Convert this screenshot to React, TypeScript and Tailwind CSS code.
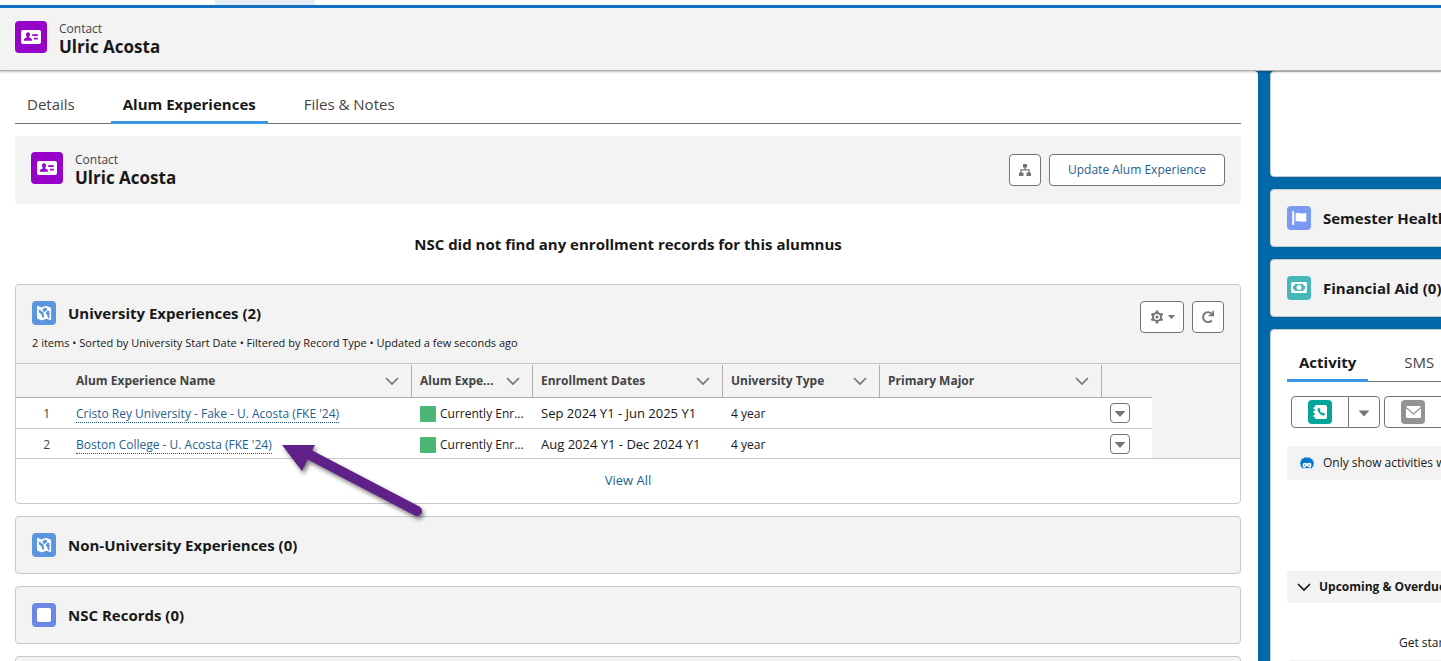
import type { ReactNode } from "react";

type IconProps = { className?: string };

function ContactIcon() {
  return (
    <span className="flex h-8 w-8 shrink-0 items-center justify-center rounded bg-[#9602c7]">
      <svg viewBox="0 0 20 14" className="h-[14px] w-5" aria-hidden="true">
        <rect width="20" height="14" rx="2" fill="#fff" />
        <path
          d="M7 2.2c1.3 0 2 1 2 2.2 0 .9-.4 1.6-.9 2.100-.2.700 0 1 .5 1.200l1.300.6c.7.300.9.800.9 1.500v.9H3v-.9c0-.7.300-1.200.9-1.500l1.400-.6c.5-.2.600-.6.400-1.200C5.300 6 5 5.300 5 4.400 5 3.200 5.700 2.200 7 2.200zM11.200 4.200h5.600v1.700h-5.600zM13 7.700h3.800v1.700H13z"
          fill="#9602c7"
        />
      </svg>
    </span>
  );
}

function MapIcon() {
  return (
    <span className="flex h-6 w-6 shrink-0 items-center justify-center rounded bg-[#5a95dd]">
      <svg viewBox="0 0 24 24" className="h-6 w-6" aria-hidden="true">
        <path
          d="M5 5.800c0-.6.400-.9 1-.7l3.500 1.300 4.200-1.500c.3-.1.600-.1.900 0l3.900 1.500c.4.200.6.500.6.900v11.100c0 .6-.5.900-1 .7l-3.600-1.300-4.200 1.500c-.3.100-.6.100-.9 0l-3.800-1.500c-.4-.2-.6-.5-.6-.9z"
          fill="#fff"
        />
        <path
          d="M6.500 8.500l2 .8 1.700 1.500 1.600.4-.5 1.800 1 1.600-.8 2.400-1.400-.8-.8-3-2-1.500zM10.500 8l3-1.500 1.800 1-.8 2-1.800 1.500-1.800-.7zM13.500 12l2.200-2.500 1.800.5v7.500l-1.500-.7-.8-2.500z"
          fill="#5a95dd"
        />
      </svg>
    </span>
  );
}

function SquareIcon() {
  return (
    <span className="flex h-6 w-6 shrink-0 items-center justify-center rounded bg-[#6b87e6]">
      <span className="h-[14px] w-[14px] rounded-xs bg-white" />
    </span>
  );
}

function FlagIcon() {
  return (
    <span className="flex h-6 w-6 shrink-0 items-center justify-center rounded bg-[#7a9af2]">
      <svg viewBox="0 0 24 24" className="h-6 w-6" aria-hidden="true">
        <path
          d="M6.200 4.900a1 1 0 0 1 1 1v12.600c0 .3-.2.500-.5.500h-1c-.3 0-.5-.2-.5-.5V5.900a1 1 0 0 1 1-1zM8.600 7.400c3.400-2 5.500 1.300 10.100-.3.300-.1.600.1.600.4v7.300c0 .300-.2.500-.5.600-4.300 1.500-6.700-1.300-10.200.2z"
          fill="#fff"
        />
      </svg>
    </span>
  );
}

function MoneyIcon() {
  return (
    <span className="flex h-6 w-6 shrink-0 items-center justify-center rounded bg-[#45b7b7]">
      <svg viewBox="0 0 24 24" className="h-6 w-6" aria-hidden="true">
        <rect x="4" y="6" width="16" height="11" rx="1.500" fill="#fff" />
        <path d="M8 8h8c0 1 .8 2 2 2v3c-1.200 0-2 1-2 2H8c0-1-.8-2-2-2v-3c1.200 0 2-1 2-2z" fill="#45b7b7" />
        <circle cx="12" cy="11.500" r="2.500" fill="#fff" />
      </svg>
    </span>
  );
}

function CallIcon() {
  return (
    <svg viewBox="0 0 24 24" className="h-6 w-6" aria-hidden="true">
      <rect width="24" height="24" rx="4" fill="#06a59a" />
      <path
        d="M8.500 5h8.700c1 0 1.800.8 1.800 1.800v10.400c0 1-.8 1.800-1.800 1.800H8.500c-1 0-1.800-.8-1.800-1.800v-.4h-.5a.9.900 0 0 1 0-1.800h.5v-2.100h-.5a.9.900 0 0 1 0-1.800h.5V9h-.5a.9.900 0 0 1 0-1.800h.5v-.4c0-1 .8-1.800 1.800-1.800z"
        fill="#fff"
      />
      <path
        d="M10 8.500c.5-.6 1.300-.7 1.700 0l.7 1.200c.2.400 0 .8-.4 1.100.4 1.200 1.100 1.900 2.200 2.300.3-.4.700-.6 1.100-.4l1.200.7c.7.400.6 1.200 0 1.700-.8.800-2 .6-3.400-.3-1.200-.8-2.200-1.800-2.900-3-.7-1.300-.9-2.500-.2-3.300z"
        fill="#06a59a"
      />
    </svg>
  );
}

function EmailIcon() {
  return (
    <svg viewBox="0 0 24 24" className="h-6 w-6" aria-hidden="true">
      <rect width="24" height="24" rx="4" fill="#939393" />
      <rect x="5" y="6" width="15" height="12" rx="1.500" fill="#fff" />
      <path d="M5 7.500l7.500 6.500L20 7.500" fill="none" stroke="#939393" strokeWidth="1.200" />
    </svg>
  );
}

function EinsteinIcon() {
  return (
    <svg viewBox="0 0 16 14" className="h-[14px] w-4 shrink-0" aria-hidden="true">
      <path
        d="M8 1l1.500 1L11 1.300l.6 1.500 1.900-.1-.1 1.700 1.500.7-.8 1.400 1.200 1.200-1.200 1 .7 1.500-1.500.5-.3 1.600H3l-.3-1.600-1.500-.5.700-1.500-1.200-1 1.200-1.200-.8-1.400 1.500-.7-.1-1.700 1.900.1L5 1.300 6.500 2z"
        fill="#0176d3"
      />
      <path d="M3.700 7.700c1.300-1.200 2.600-1.300 4.300-.3 1.700-1 3-.9 4.300.3v2.500c-.4 1.300-1.300 2-2.300 2.300H6c-1-.3-1.900-1-2.300-2.300z" fill="#fff" />
      <path d="M5.300 8.500h1.200v1.200H5.300zM9.500 8.500h1.200v1.200H9.500zM5 12l3-2 3 2z" fill="#0176d3" />
    </svg>
  );
}

function ChevronDown({ className }: IconProps) {
  return (
    <svg viewBox="0 0 14 14" className={className} fill="none" stroke="currentColor" aria-hidden="true">
      <path d="M1.500 4.500L7 10l5.500-5.500" strokeWidth="1.700" strokeLinecap="round" />
    </svg>
  );
}

function Triangle({ className }: IconProps) {
  return (
    <svg viewBox="0 0 10 6" className={className} fill="currentColor" aria-hidden="true">
      <path d="M.5 0h9c.4 0 .6.400.3.700L5.400 5.600a.6.600 0 0 1-.8 0L.2.700C-.1.400.100 0 .5 0z" />
    </svg>
  );
}

function HierarchyIcon() {
  return (
    <svg viewBox="0 0 14 14" className="h-[14px] w-[14px]" fill="currentColor" aria-hidden="true">
      <rect x="5" y="1" width="4" height="3.500" rx=".5" />
      <rect x="1" y="9.500" width="4.500" height="3.500" rx=".5" />
      <rect x="8.500" y="9.500" width="4.500" height="3.500" rx=".5" />
      <path d="M7 4v3M3 10V6.800h8V10" fill="none" stroke="currentColor" strokeWidth="1.300" />
    </svg>
  );
}

function GearIcon() {
  return (
    <svg viewBox="0 0 14 14" className="h-[14px] w-[14px]" fill="none" stroke="currentColor" aria-hidden="true">
      <circle cx="7" cy="7" r="4" strokeWidth="1.900" />
      <circle cx="7" cy="7" r="1.600" fill="currentColor" stroke="none" />
      <path
        d="M7 .5v2.300M7 11.200v2.300M1.400 3.800l2 1.100M10.600 9.100l2 1.100M12.600 3.800l-2 1.100M3.400 9.100l-2 1.100"
        strokeWidth="2.500"
      />
    </svg>
  );
}

function RefreshIcon() {
  return (
    <svg viewBox="0 0 14 14" className="h-[14px] w-[14px]" fill="none" stroke="currentColor" aria-hidden="true">
      <path d="M10.800 10.500A5 5 0 1 1 10.500 3.500L12 5" strokeWidth="1.900" />
      <path d="M13 .8v5.400H7.600V4.600h3.800V.8z" fill="currentColor" stroke="none" />
    </svg>
  );
}

function RecordTitle() {
  return (
    <div className="flex items-start gap-3">
      <ContactIcon />
      <div>
        <p className="text-[12px] leading-4 text-[#444]">Contact</p>
        <h1 className="text-[17px] leading-5 font-bold">Ulric Acosta</h1>
      </div>
    </div>
  );
}

function RelatedCard({ icon, title }: { icon: ReactNode; title?: string }) {
  return (
    <section className="flex h-[58px] shrink-0 items-center gap-3 rounded border border-[#c9c9c9] bg-[#f3f3f3] px-4">
      {icon}
      {title && <h2 className="text-[15px] font-bold whitespace-nowrap">{title}</h2>}
    </section>
  );
}

const tabs = ["Details", "Alum Experiences", "Files & Notes"];

const columns = ["Alum Experience Name", "Alum Expe...", "Enrollment Dates", "University Type", "Primary Major"];

const rows = [
  {
    name: "Cristo Rey University - Fake - U. Acosta (FKE '24)",
    status: "Currently Enr...",
    dates: "Sep 2024 Y1 - Jun 2025 Y1",
    type: "4 year",
  },
  {
    name: "Boston College - U. Acosta (FKE '24)",
    status: "Currently Enr...",
    dates: "Aug 2024 Y1 - Dec 2024 Y1",
    type: "4 year",
  },
];

const iconButton = "flex h-8 items-center justify-center rounded border border-[#747474] bg-white text-[#747474]";

function ExperienceTable() {
  return (
    <div className="border-y border-[#c9c9c9] bg-[#f3f3f3]">
      <table className="w-[1136px] table-fixed border-separate border-spacing-0 text-[12px]">
        <colgroup>
          <col className="w-[52px]" />
          <col className="w-[344px]" />
          <col className="w-[121px]" />
          <col className="w-[190px]" />
          <col className="w-[157px]" />
          <col className="w-[222px]" />
          <col className="w-[50px]" />
        </colgroup>
        <thead>
          <tr className="h-[34px]">
            <th aria-label="Row number" className="border-b border-[#aeaeae]" />
            {columns.map((label) => (
              <th key={label} className="border-b border-[#aeaeae] p-0 text-left font-bold text-[#444]">
                <div className="flex h-8 items-center justify-between border-r border-[#aeaeae] pr-3 pl-2">
                  <span className="whitespace-nowrap">{label}</span>
                  <ChevronDown className="h-[14px] w-[14px] shrink-0 text-[#747474]" />
                </div>
              </th>
            ))}
            <th aria-label="Actions" className="border-b border-[#aeaeae]" />
          </tr>
        </thead>
        <tbody className="bg-white [&>tr+tr>td]:border-t [&>tr+tr>td]:border-[#c9c9c9]">
          {rows.map((row, i) => (
            <tr key={row.name} className="h-[30px]">
              <td className="pt-0.5 pr-[18px] text-right text-[#444]">{i + 1}</td>
              <td className="px-2 pt-0.5">
                <a href="#" className="border-b border-dotted border-[#1b5a8e] leading-4 text-[#1f5f93]">
                  {row.name}
                </a>
              </td>
              <td className="pt-0.5 pl-2">
                <div className="flex items-center gap-1 whitespace-nowrap">
                  <span className="h-4 w-4 shrink-0 rounded-[1px] bg-[#4bb573]" />
                  {row.status}
                </div>
              </td>
              <td className="px-2 pt-0.5 text-[13px] whitespace-nowrap">{row.dates}</td>
              <td className="px-2 pt-0.5">{row.type}</td>
              <td />
              <td className="px-2">
                <button
                  aria-label="Show actions"
                  className="flex h-5 w-5 items-center justify-center rounded border border-[#747474] pt-0.5 text-[#747474]"
                >
                  <Triangle className="h-[6px] w-[10px]" />
                </button>
              </td>
            </tr>
          ))}
        </tbody>
      </table>
    </div>
  );
}

function Arrow() {
  return (
    <svg
      viewBox="0 0 150 90"
      className="pointer-events-none absolute top-[365px] left-[280px] h-[90px] w-[150px] drop-shadow-[2px_3px_2px_rgba(0,0,0,0.5)]"
      aria-hidden="true"
    >
      <path d="M28 18L137 75" stroke="#5f2088" strokeWidth="10" strokeLinecap="round" />
      <path d="M2 9h33L22 35z" fill="#5f2088" />
    </svg>
  );
}

export default function App() {
  return (
    <div className="flex h-screen flex-col overflow-hidden bg-[#0169a7] font-['Open_Sans','Noto_Sans',sans-serif] text-[13px] text-[#181818]">
      <div className="h-[5px] shrink-0 bg-white">
        <div className="ml-[215px] h-full w-[100px] bg-[#e6eef8]" />
      </div>
      <header className="z-10 shrink-0 border-t-3 border-b border-t-[#1271c4] border-b-[#aeaeae] bg-[#f3f3f3] px-[15px] py-[13px] shadow-[0_1px_2px_rgba(0,0,0,0.25)]">
        <RecordTitle />
      </header>

      <div className="flex min-h-0 flex-1">
        <main className="relative min-w-0 flex-1 rounded-tr bg-white pr-[17px] pl-[15px]">
          <nav className="flex h-[53px] items-end gap-6 border-b border-[#747474] text-[15px] text-[#444]">
            {tabs.map((tab) => (
              <a
                key={tab}
                href="#"
                className={
                  tab === "Alum Experiences"
                    ? "-mb-px border-b-3 border-[#3c97e8] px-3 pb-[3px] leading-7 font-bold text-[#181818]"
                    : "-mb-px px-3 pb-[6px] leading-7"
                }
              >
                {tab}
              </a>
            ))}
          </nav>

          <section className="mt-3 flex h-[68px] items-start justify-between rounded bg-[#f3f3f3] px-4 pt-4">
            <RecordTitle />
            <div className="mt-0.5 flex gap-2">
              <button aria-label="View hierarchy" className={`w-8 ${iconButton}`}>
                <HierarchyIcon />
              </button>
              <button className="h-8 rounded border border-[#747474] bg-white px-[18px] text-[12px] text-[#1f5f93]">
                Update Alum Experience
              </button>
            </div>
          </section>

          <p className="mt-7 text-center text-[15px] leading-6 font-bold">
            NSC did not find any enrollment records for this alumnus
          </p>

          <div className="mt-7 flex flex-col gap-3">
            <section className="rounded border border-[#c9c9c9] bg-white">
              <div className="flex h-[78px] items-start justify-between rounded-t bg-[#f3f3f3] px-4 pt-4">
                <div>
                  <div className="flex h-6 items-center gap-3">
                    <MapIcon />
                    <h2 className="text-[15px] font-bold">University Experiences (2)</h2>
                  </div>
                  <p className="mt-2 text-[11px] leading-5">
                    2 items • Sorted by University Start Date • Filtered by Record Type • Updated a few seconds ago
                  </p>
                </div>
                <div className="flex gap-2">
                  <button aria-label="List view controls" className={`w-11 gap-1 ${iconButton}`}>
                    <GearIcon />
                    <Triangle className="h-1 w-[7px]" />
                  </button>
                  <button aria-label="Refresh" className={`w-8 ${iconButton}`}>
                    <RefreshIcon />
                  </button>
                </div>
              </div>
              <ExperienceTable />
              <div className="flex h-11 items-center justify-center">
                <a href="#" className="text-[#1f5f93]">
                  View All
                </a>
              </div>
            </section>

            <RelatedCard icon={<MapIcon />} title="Non-University Experiences (0)" />
            <RelatedCard icon={<SquareIcon />} title="NSC Records (0)" />
            <RelatedCard icon={<SquareIcon />} />
          </div>
          <Arrow />
        </main>

        <aside className="ml-3 flex w-[171px] shrink-0 flex-col gap-3 overflow-hidden">
          <div className="-mr-2 h-[106px] shrink-0 rounded border border-[#c9c9c9] bg-white" />
          <div className="-mr-2 flex flex-col gap-3">
            <RelatedCard icon={<FlagIcon />} title="Semester Health (0)" />
            <RelatedCard icon={<MoneyIcon />} title="Financial Aid (0)" />
          </div>
          <section className="-mr-2 flex-1 rounded-t border border-[#c9c9c9] bg-white pl-4 whitespace-nowrap">
            <nav className="flex h-[52px] items-end gap-6 border-b border-[#747474] text-[15px] text-[#444]">
              <a href="#" className="-mb-px border-b-3 border-[#3c97e8] px-3 pb-[3px] leading-7 font-bold text-[#181818]">
                Activity
              </a>
              <a href="#" className="-mb-px px-3 pb-[6px] leading-7">
                SMS
              </a>
            </nav>
            <div className="mt-[14px] ml-1 flex gap-1">
              <div className="flex shrink-0">
                <button
                  aria-label="Log a call"
                  className="flex h-8 w-[58px] items-center justify-center rounded-l border border-[#747474]"
                >
                  <CallIcon />
                </button>
                <button
                  aria-label="More call actions"
                  className="-ml-px flex h-8 w-8 items-center justify-center rounded-r border border-[#747474] pt-0.5 text-[#747474]"
                >
                  <Triangle className="h-[7px] w-[10px]" />
                </button>
              </div>
              <button
                aria-label="Email"
                className="flex h-8 w-[58px] shrink-0 items-center justify-center rounded-l border border-[#747474]"
              >
                <EmailIcon />
              </button>
            </div>
            <div className="mt-[18px] flex h-[34px] items-center gap-2 rounded-l bg-[#f3f3f3] pl-3 text-[12px]">
              <EinsteinIcon />
              Only show activities with insights
            </div>
            <button className="mt-[91px] flex h-8 w-full items-center gap-2 rounded-l bg-[#f3f3f3] pl-[10px] text-[12px] font-bold">
              <ChevronDown className="h-[14px] w-[14px] shrink-0" />
              Upcoming &amp; Overdue
            </button>
            <p className="mt-7 pl-28 text-[12px] leading-6">Get started by sending an email</p>
            <div className="mt-[5px] h-8 rounded-l bg-[#f3f3f3]" />
          </section>
        </aside>
      </div>
    </div>
  );
}
